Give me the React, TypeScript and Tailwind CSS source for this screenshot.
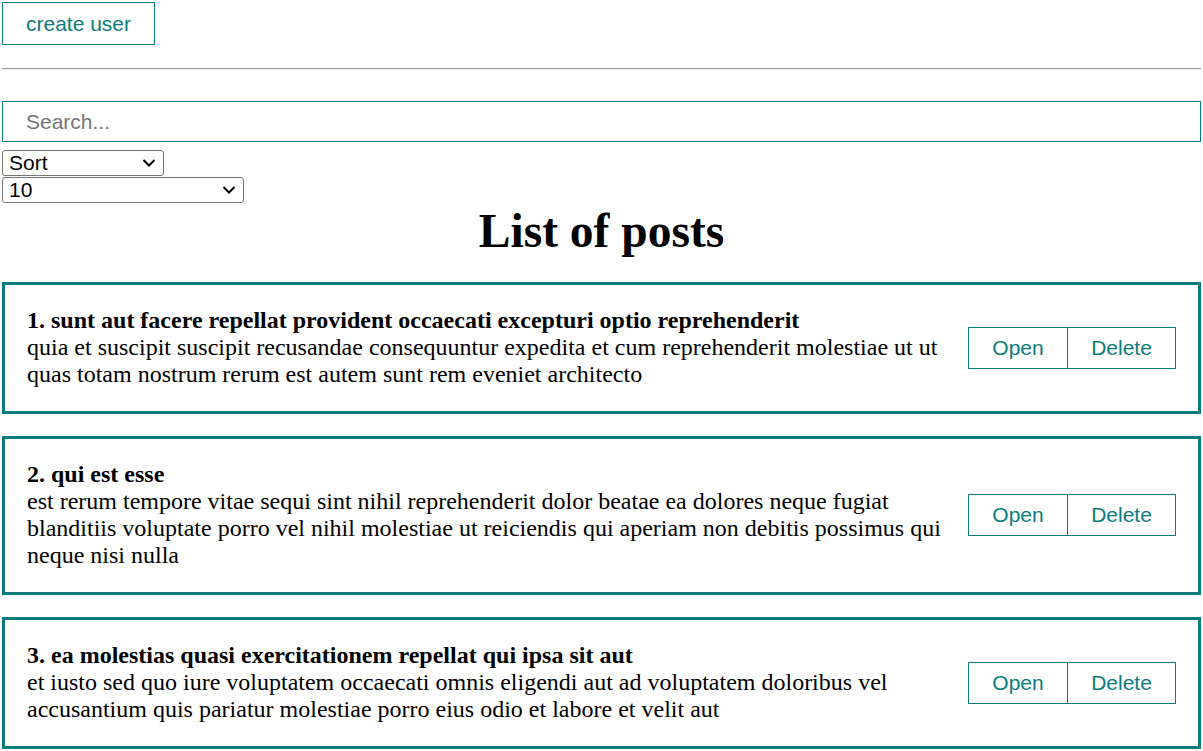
import { useState } from "react";

const posts = [
  {
    id: 1,
    title: "sunt aut facere repellat provident occaecati excepturi optio reprehenderit",
    body: "quia et suscipit suscipit recusandae consequuntur expedita et cum reprehenderit molestiae ut ut quas totam nostrum rerum est autem sunt rem eveniet architecto",
  },
  {
    id: 2,
    title: "qui est esse",
    body: "est rerum tempore vitae sequi sint nihil reprehenderit dolor beatae ea dolores neque fugiat blanditiis voluptate porro vel nihil molestiae ut reiciendis qui aperiam non debitis possimus qui neque nisi nulla",
  },
  {
    id: 3,
    title: "ea molestias quasi exercitationem repellat qui ipsa sit aut",
    body: "et iusto sed quo iure voluptatem occaecati omnis eligendi aut ad voluptatem doloribus vel accusantium quis pariatur molestiae porro eius odio et labore et velit aut",
  },
];

const btn =
  "h-[42px] border border-[#0c7b7b] bg-transparent text-[#0c7b7b] text-[21px] font-['Liberation_Sans',Arial,sans-serif] cursor-pointer";

const sel =
  "block appearance-none h-[26px] pl-[6px] pb-[2px] border border-[#767676] rounded-[3px] bg-white text-[21px] text-black font-['Liberation_Sans',Arial,sans-serif] leading-none";

function Chevron() {
  return (
    <svg
      className="pointer-events-none absolute right-[8px] top-1/2 -translate-y-1/2"
      width="14"
      height="9"
      viewBox="0 0 14 9"
      fill="none"
    >
      <path d="M1.5 1.5 7 7l5.5-5.5" stroke="#000" strokeWidth="2" />
    </svg>
  );
}

export default function App() {
  const [search, setSearch] = useState("");
  const [list, setList] = useState(posts);

  return (
    <div className="p-[2px] font-['Liberation_Serif','Times_New_Roman',serif] text-black">
      <button className={btn + " w-[153px] h-[43px]"}>create user</button>

      <hr className="mt-[23px] mb-[31px] h-[2px] border-0 border-t border-t-[#9a9a9a] border-b border-b-[#eeeeee]" />

      <input
        value={search}
        onChange={(e) => setSearch(e.target.value)}
        placeholder="Search..."
        className="block w-full h-[41px] px-[23px] border border-[#0c7b7b] text-[21px] font-['Liberation_Sans',Arial,sans-serif] placeholder:text-[#757575] outline-none"
      />

      {/* SORT + LIMIT */}
      <div className="mt-[8px] flex flex-col items-start gap-[1px]">
        <div className="relative">
          <select className={sel + " w-[162px]"}>
            <option>Sort</option>
            <option>By title</option>
            <option>By body</option>
          </select>
          <Chevron />
        </div>
        <div className="relative">
          <select className={sel + " w-[242px]"}>
            <option>10</option>
            <option>25</option>
            <option>-1</option>
          </select>
          <Chevron />
        </div>
      </div>

      <h1 className="mt-[1px] mb-[24px] text-center text-[47.5px] font-bold leading-[54px]">List of posts</h1>

      <div>
        {list.map((p, i) => (
          <div
            key={p.id}
            className={
              "flex items-center justify-between border-[3px] border-[#0c7b7b] px-[22px] pt-[22px] pb-[23px] " +
              (i > 0 ? "mt-[22px]" : "")
            }
          >
            <div className="flex-1 pr-[20px] text-[24px] leading-[27px]">
              <strong>
                {p.id}. {p.title}
              </strong>
              <div>{p.body}</div>
            </div>
            <div className="flex shrink-0">
              <button className={btn + " w-[100px]"}>Open</button>
              <button
                className={btn + " w-[109px] -ml-px"}
                onClick={() => setList(list.filter((x) => x.id !== p.id))}
              >
                Delete
              </button>
            </div>
          </div>
        ))}
      </div>
    </div>
  );
}
